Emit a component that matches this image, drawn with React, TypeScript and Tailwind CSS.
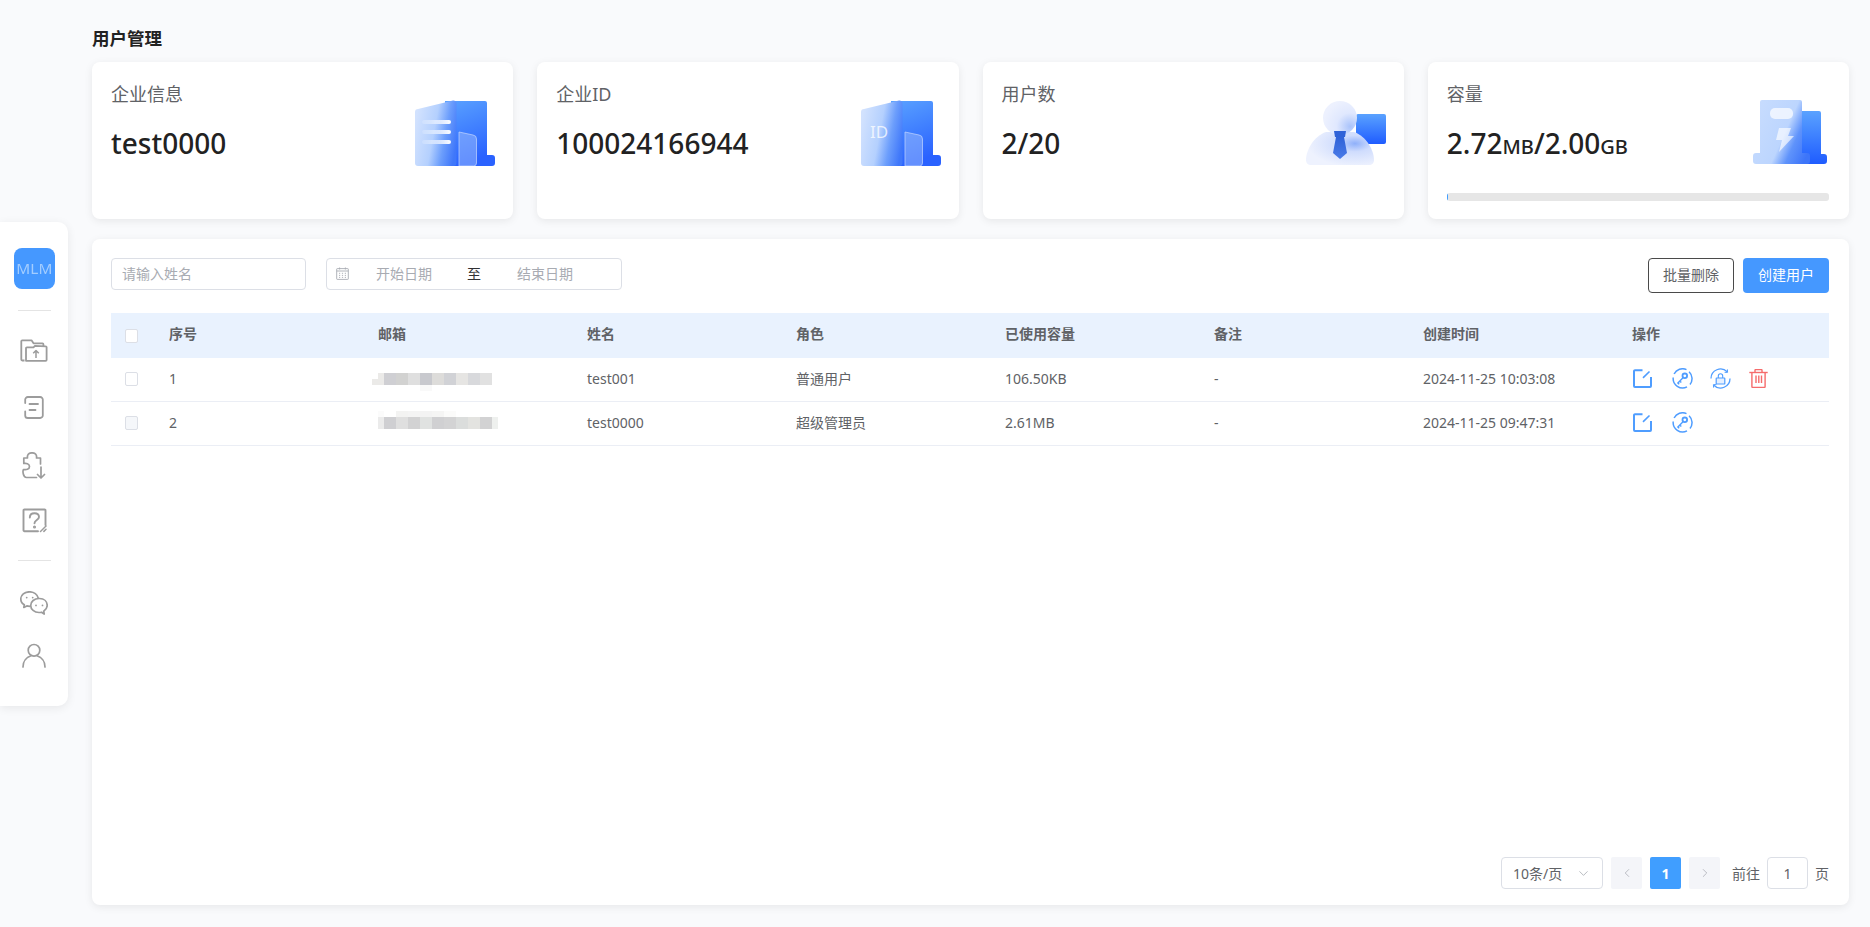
import { ChevronDown, ChevronLeft, ChevronRight } from "lucide-react";

const columns = ["序号", "邮箱", "姓名", "角色", "已使用容量", "备注", "创建时间", "操作"];

const users = [
  {
    id: 1,
    name: "test001",
    role: "普通用户",
    used: "106.50KB",
    created: "2024-11-25 10:03:08",
    disabled: false,
  },
  {
    id: 2,
    name: "test0000",
    role: "超级管理员",
    used: "2.61MB",
    created: "2024-11-25 09:47:31",
    disabled: true,
  },
];

// pixelated email addresses
const mosaicOne = [
  "bg-[#cfcfd3]",
  "bg-[#d2d2d1]",
  "bg-[#dfdfdf]",
  "bg-[#c8c9ce]",
  "bg-[#dddcda]",
  "bg-[#d1d2d6]",
  "bg-[#e6e5e3]",
  "bg-[#d8d9dc]",
  "bg-[#e1e1e1]",
];
const mosaicTwo = [
  "bg-[#ebebeb]",
  "bg-[#cfcfd2]",
  "bg-[#dfdfdf]",
  "bg-[#d2d2d3]",
  "bg-[#e0e2e1]",
  "bg-[#d0d0d2]",
  "bg-[#d3d3d4]",
  "bg-[#dbdddc]",
  "bg-[#e3e3e0]",
  "bg-[#d2d2d3]",
  "bg-[#eef0ee]",
];
const mosaicTwoTop = [
  "bg-[#fbfbfb]",
  "bg-white",
  "bg-[#f3f3f2]",
  "bg-[#f4f4f4]",
  "bg-[#f3f3f3]",
  "bg-[#f5f5f4]",
  "bg-[#fbfbfa]",
];

function EmailMosaicOne() {
  return (
    <div className="relative h-[12px] w-[120px] flex -ml-[6px]">
      <div className="h-[12px] w-[12px] flex flex-col justify-end">
        <div className="h-[6px] w-[12px] bg-[#ebeae8]" />
      </div>
      {mosaicOne.map((c, i) => (
        <div key={i} className={`h-[12px] w-[12px] ${c}`} />
      ))}
      <div className="absolute left-[48px] top-[12px] h-[6px] w-[12px] bg-[#f9f9f9]" />
      <div className="absolute left-[6px] top-0 h-[6px] w-[6px] bg-[#ebeae8]" />
    </div>
  );
}

function EmailMosaicTwo() {
  return (
    <div className="relative h-[12px] w-[120px] flex">
      {mosaicTwo.map((c, i) => (
        <div key={i} className={`h-[12px] ${i === 0 || i === 10 ? "w-[6px]" : "w-[12px]"} ${c}`} />
      ))}
      <div className="absolute left-0 -top-[6px] flex">
        {mosaicTwoTop.map((c, i) => (
          <div key={i} className={`h-[6px] ${i === 0 ? "w-[6px]" : "w-[12px]"} ${c}`} />
        ))}
      </div>
    </div>
  );
}

function FolderIcon() {
  return (
    <svg width="28" height="24" viewBox="0 0 28 24" fill="none" stroke="#9c9c9c" strokeWidth="1.8" strokeLinejoin="round">
      <path d="M4.500 21.500H2.200a.9.9 0 0 1-.9-.9V2.200a.9.9 0 0 1 .9-.9h9.300l2 3h9a.9.9 0 0 1 .9.900v2.200" />
      <path d="M6 21.800V9.200a.9.9 0 0 1 .9-.9h6.600l1.400-1.400 10.900.4c.4 0 .8.400.8.900v12.700a.9.9 0 0 1-.9.900H6.900a.9.9 0 0 1-.9-.9z" />
      <path d="M16 19v-7.200M13.200 14.200 16 11.600l2.800 2.600" strokeWidth="1.500" />
    </svg>
  );
}

function NoteIcon() {
  return (
    <svg width="20" height="23" viewBox="0 0 20 23" fill="none" stroke="#9c9c9c" strokeWidth="1.800" strokeLinecap="round">
      <path d="M1.200 7V3.600A2.600 2.600 0 0 1 3.800 1h12.400a2.600 2.600 0 0 1 2.600 2.600v15.800a2.600 2.600 0 0 1-2.600 2.600H3.800a2.600 2.600 0 0 1-2.600-2.600v-4" />
      <path d="M5.500 8h8.500M5.500 14h6" />
    </svg>
  );
}

function PluginIcon() {
  return (
    <svg width="24" height="27" viewBox="0 0 24 27" fill="none" stroke="#9c9c9c" strokeWidth="1.700" strokeLinecap="round" strokeLinejoin="round">
      <path d="M18.500 12V6H14.500C15 3 13.500.8 10 .8 6.500.8 5 3 5.500 6H1.800v5.500c2.200-.5 5.700 0 5.700 3s-3.500 3.500-6 3c-1 1.500-.5 8 3 8h10" />
      <path d="M19 15v10.500M15.500 22.500 19 26l3.500-3.500" />
    </svg>
  );
}

function HelpIcon() {
  return (
    <svg width="25" height="25" viewBox="0 0 25 25" fill="none" stroke="#9c9c9c" strokeWidth="1.900" strokeLinecap="round">
      <path d="M16 23.200H2.400a.9.9 0 0 1-.9-.9V2.400a.9.9 0 0 1 .9-.9h20.200a.9.9 0 0 1 .9.900v14.600" />
      <path d="M7.800 9.500c0-2.700 2-4.300 4.700-4.300s4.500 1.600 4.500 3.800c0 3-4.500 3.100-4.500 6.300" />
      <circle cx="12.500" cy="19" r="0.600" fill="#9c9c9c" />
      <path d="M18.500 23.500 24 18" strokeWidth="1.500" />
      <path d="M21.900 23.400 24 21.300" strokeWidth="1.500" />
    </svg>
  );
}

function ChatIcon() {
  return (
    <svg width="28" height="24" viewBox="0 0 28 24" fill="none" stroke="#9c9c9c" strokeWidth="1.700" strokeLinejoin="round" strokeLinecap="round">
      <path d="M18.300 7.200C17.500 3.600 14 .8 9.500 .8 4.500 .8.8 4 .8 8c0 2.500 1.300 4.500 3.500 5.800l-.5 2.700 3-1.600c1 .3 2 .4 3.200.5" />
      <path d="M19 7.500c-4.700 0-8.300 3-8.300 7 0 3.900 3.600 7 8.300 7 1 0 1.700-.1 2.500-.3l2.700 1.800-.5-2.800c2-1.300 3.500-3.300 3.500-5.700 0-4-3-7-7.700-7z" />
      <circle cx="6.700" cy="6.600" r="0.900" fill="#9c9c9c" stroke="none" />
      <circle cx="12.700" cy="6.600" r="0.900" fill="#9c9c9c" stroke="none" />
      <circle cx="16" cy="14.400" r="0.900" fill="#9c9c9c" stroke="none" />
      <circle cx="22.500" cy="14.400" r="0.900" fill="#9c9c9c" stroke="none" />
    </svg>
  );
}

function UserIcon() {
  return (
    <svg width="24" height="25" viewBox="0 0 24 25" fill="none" stroke="#9c9c9c" strokeWidth="1.700" strokeLinecap="round">
      <circle cx="12" cy="7.300" r="5.800" />
      <path d="M1 24c0-5.800 3.800-9.700 7.500-11M23 24c0-5.800-3.800-9.700-7.500-11" />
    </svg>
  );
}

function CalendarIcon() {
  return (
    <svg width="13" height="13" viewBox="0 0 13 13" fill="none" stroke="#a8abb2" strokeWidth="0.900">
      <rect x="0.700" y="1.600" width="11.600" height="10.800" rx="0.600" />
      <path d="M0.700 4h11.600M3.600 0.500v2M9.400 0.500v2" />
      <path d="M3 6.300h1.200M5.900 6.300h1.200M8.800 6.300h1.200M3 8.400h1.200M5.900 8.400h1.200M8.800 8.400h1.200M3 10.400h1.200M5.900 10.400h1.200M8.800 10.400h1.200" />
    </svg>
  );
}

function EditIcon() {
  return (
    <svg width="19" height="19" viewBox="0 0 19 19" fill="none" stroke="#4f9dff" strokeWidth="2">
      <path d="M9.500 1.200H2a1 1 0 0 0-1 1V17a1 1 0 0 0 1 1h15a1 1 0 0 0 1-1V8" />
      <path d="M10 8.800 16.500 2.500" strokeWidth="1.700" />
    </svg>
  );
}

function KeyIcon() {
  return (
    <svg width="21" height="21" viewBox="0 0 21 21" fill="none" stroke="#4f9dff" strokeWidth="1.500">
      <path d="M14.500 1.600A9.500 9.500 0 0 0 2.100 6M1.200 9.500a9.500 9.500 0 0 0 13.800 9.400M18 16.500a9.500 9.500 0 0 0 2-6.500 9.500 9.500 0 0 0-2.900-6.300" />
      <circle cx="12.800" cy="7.800" r="2.300" strokeWidth="1.800" />
      <path d="M11 9.800 5.400 15.400M7.800 13l1.500 1.500M5.900 14.900l1.300 1.300" strokeWidth="1.400" />
    </svg>
  );
}

function LockResetIcon() {
  return (
    <svg width="21" height="21" viewBox="0 0 21 21" fill="none" stroke="#4f9dff" strokeWidth="1.300">
      <path d="M1 10.500A9.500 9.500 0 0 1 17.200 3.800M20 10.500A9.500 9.500 0 0 1 3.800 17.200" />
      <path d="M14.600 4.300l3 .1-.2-3M6.400 16.700l-3-.1.2 3" strokeWidth="1" />
      <rect x="6.200" y="10" width="8.600" height="6" rx="0.600" strokeWidth="1.200" fill="#e6f0ff" />
      <path d="M8.300 10V8a2.200 2.200 0 0 1 4.400 0v2" strokeWidth="1.100" />
    </svg>
  );
}

function TrashIcon() {
  return (
    <svg width="19" height="19" viewBox="0 0 19 19" fill="none" stroke="#f56c6c" strokeWidth="1.400">
      <path d="M0.300 3.500h18.400" />
      <path d="M6 3.300V1.200a.7.700 0 0 1 .7-.7h5.600a.7.700 0 0 1 .7.700v2.100" />
      <path d="M2.900 3.500v14a1 1 0 0 0 1 1h11.200a1 1 0 0 0 1-1v-14" />
      <path d="M7 6.500v7.500M9.800 6.500v7.500M12.500 6.500v7.500" />
    </svg>
  );
}

function DocArt() {
  return (
    <svg width="80" height="66" viewBox="0 0 80 66">
      <defs>
        <linearGradient id="docBack" x1="0" y1="0" x2="0.300" y2="1">
          <stop offset="0" stopColor="#5aa2ff" />
          <stop offset="1" stopColor="#2a62ff" />
        </linearGradient>
        <linearGradient id="docFront" x1="0" y1="0.350" x2="1" y2="0.650">
          <stop offset="0" stopColor="#d2e2fe" />
          <stop offset="0.450" stopColor="#b4d0fe" />
          <stop offset="0.720" stopColor="#6c9efc" />
          <stop offset="1" stopColor="#3f77fa" />
        </linearGradient>
        <linearGradient id="docLine" x1="0" y1="0" x2="1" y2="0">
          <stop offset="0" stopColor="#fff" stopOpacity="0.150" />
          <stop offset="1" stopColor="#fff" />
        </linearGradient>
        <filter id="docSoft"><feGaussianBlur stdDeviation="0.500" /></filter>
      </defs>
      <path d="M30 1h40a2 2 0 0 1 2 2v52h5a3 3 0 0 1 3 3v5a3 3 0 0 1-3 3H30z" fill="url(#docBack)" />
      <path d="M3 9 38 0.500a3 3 0 0 1 3.500 3V63a3 3 0 0 1-3 3H3a3 3 0 0 1-3-3V12a3 3 0 0 1 3-3z" fill="url(#docFront)" />
      <g filter="url(#docSoft)">
        <rect x="7" y="20" width="29" height="4" rx="2" fill="url(#docLine)" />
        <rect x="7" y="30" width="29" height="4" rx="2" fill="url(#docLine)" />
        <rect x="7" y="40" width="29" height="4" rx="2" fill="url(#docLine)" />
      </g>
      <path d="M44 32 58 35a4 4 0 0 1 3.500 4v24a3 3 0 0 1-3 3H44z" fill="#9dbdfd" fillOpacity="0.500" stroke="#c3d6ff" strokeOpacity="0.700" />
    </svg>
  );
}

function IdArt() {
  return (
    <svg width="80" height="66" viewBox="0 0 80 66">
      <defs>
        <linearGradient id="idBack" x1="0" y1="0" x2="0.300" y2="1">
          <stop offset="0" stopColor="#5aa2ff" />
          <stop offset="1" stopColor="#2a62ff" />
        </linearGradient>
        <linearGradient id="idFront" x1="0" y1="0.350" x2="1" y2="0.650">
          <stop offset="0" stopColor="#d2e2fe" />
          <stop offset="0.450" stopColor="#b4d0fe" />
          <stop offset="0.720" stopColor="#6c9efc" />
          <stop offset="1" stopColor="#3f77fa" />
        </linearGradient>
      </defs>
      <path d="M30 1h40a2 2 0 0 1 2 2v52h5a3 3 0 0 1 3 3v5a3 3 0 0 1-3 3H30z" fill="url(#idBack)" />
      <path d="M3 9 38 0.500a3 3 0 0 1 3.500 3V63a3 3 0 0 1-3 3H3a3 3 0 0 1-3-3V12a3 3 0 0 1 3-3z" fill="url(#idFront)" />
      <text x="9" y="38" fill="#fff" fillOpacity="0.750" fontSize="17" fontFamily="'Noto Sans', sans-serif">ID</text>
      <path d="M44 32 58 35a4 4 0 0 1 3.500 4v24a3 3 0 0 1-3 3H44z" fill="#9dbdfd" fillOpacity="0.500" stroke="#c3d6ff" strokeOpacity="0.700" />
    </svg>
  );
}

function UserArt() {
  return (
    <svg width="80" height="66" viewBox="0 0 80 66">
      <defs>
        <linearGradient id="userBack" x1="0" y1="0" x2="0" y2="1">
          <stop offset="0" stopColor="#5aa2ff" />
          <stop offset="1" stopColor="#1f5cff" />
        </linearGradient>
        <radialGradient id="userBody" cx="0.720" cy="0.350" r="0.700">
          <stop offset="0" stopColor="#8fb0fa" />
          <stop offset="0.350" stopColor="#cfdcfd" />
          <stop offset="1" stopColor="#eef2fe" />
        </radialGradient>
        <radialGradient id="userHead" cx="0.800" cy="0.750" r="0.800">
          <stop offset="0" stopColor="#a9c3fb" />
          <stop offset="0.500" stopColor="#e0e8fe" />
          <stop offset="1" stopColor="#edf1fe" />
        </radialGradient>
        <linearGradient id="userTie" x1="0" y1="0" x2="0" y2="1">
          <stop offset="0" stopColor="#2f62d8" />
          <stop offset="1" stopColor="#4a7be8" />
        </linearGradient>
      </defs>
      <rect x="50" y="14" width="30" height="30" rx="2" fill="url(#userBack)" />
      <path d="M20 32C8 36 0 50 0 60c0 3 2 5 5 5h58c3 0 5-2 5-5 0-10-8-24-20-28z" fill="url(#userBody)" />
      <circle cx="34" cy="18" r="17" fill="url(#userHead)" />
      <path d="M28 31h12l-1 6h-10z" fill="#2f62d8" />
      <path d="M30 37h8l3 16-7 6-7-6z" fill="url(#userTie)" />
    </svg>
  );
}

function PowerArt() {
  return (
    <svg width="74" height="64" viewBox="0 0 74 64">
      <defs>
        <linearGradient id="powerBack" x1="0" y1="0" x2="0" y2="1">
          <stop offset="0" stopColor="#5aa2ff" />
          <stop offset="1" stopColor="#1f5cff" />
        </linearGradient>
        <linearGradient id="powerFront" x1="0" y1="0.250" x2="1" y2="0.750">
          <stop offset="0" stopColor="#c7dcfe" />
          <stop offset="0.550" stopColor="#bcd5fe" />
          <stop offset="0.750" stopColor="#5f93fb" />
          <stop offset="1" stopColor="#3d75f9" />
        </linearGradient>
      </defs>
      <path d="M48 11h18a2 2 0 0 1 2 2v41h3a3 3 0 0 1 3 3v4a3 3 0 0 1-3 3H48z" fill="url(#powerBack)" />
      <path d="M7 2a2 2 0 0 1 2-2h38a2 2 0 0 1 2 2v51h5a3 3 0 0 1 3 3v5a3 3 0 0 1-3 3H3a3 3 0 0 1-3-3v-5a3 3 0 0 1 3-3h4z" fill="url(#powerFront)" />
      <rect x="17" y="8" width="23" height="11" rx="5" fill="#fff" fillOpacity="0.700" />
      <path d="M26 28h12l-3 8h6L26 52l3-12h-6z" fill="#fff" fillOpacity="0.650" />
    </svg>
  );
}

function StatCard({ title, art, artRight, children }: { title: string; art: React.ReactNode; artRight?: string; children: React.ReactNode }) {
  return (
    <div className="relative h-[157px] rounded-[8px] bg-white pt-[20px] pr-5 pl-[19px] shadow-[0_2px_8px_rgba(0,0,0,0.08)]">
      <div className="text-[18px] leading-[24px] text-[#606266]">{title}</div>
      <div className="mt-[18px] text-[28px] leading-[38px] font-medium text-[#222]">{children}</div>
      <div className={`absolute top-[38px] ${artRight ?? "right-[18px]"}`}>{art}</div>
    </div>
  );
}

export default function App() {
  return (
    <div className="flex h-screen items-center bg-[#f9fafc] font-['Noto_Sans','Noto_Sans_CJK_SC',sans-serif] text-[14px] text-[#606266]">
      {/* Side bar */}
      <aside className="flex h-[484px] w-[68px] shrink-0 flex-col items-center rounded-r-[10px] bg-white pt-[26px] shadow-[0_2px_10px_rgba(0,0,0,0.08)]">
        <div className="flex h-[41px] w-[41px] items-center justify-center rounded-[8px] bg-[#4598ff] text-[14px] text-[#a3cdff]">
          <span className="scale-x-110">MLM</span>
        </div>
        <div className="mt-[21px] h-px w-[33px] bg-[#e4e4e4]" />
        <div className="mt-[28px] flex h-[24px] items-center"><FolderIcon /></div>
        <div className="mt-[33px] flex h-[23px] items-center"><NoteIcon /></div>
        <div className="mt-[33px] flex h-[27px] items-center"><PluginIcon /></div>
        <div className="mt-[29px] flex h-[25px] items-center"><HelpIcon /></div>
        <div className="mt-[27px] h-px w-[33px] bg-[#e4e4e4]" />
        <div className="mt-[30px] flex h-[24px] items-center"><ChatIcon /></div>
        <div className="mt-[28px] flex h-[25px] items-center"><UserIcon /></div>
      </aside>

      <main className="ml-[24px] flex h-full min-w-0 flex-1 flex-col pt-[26px] pr-[21px] pb-[22px]">
        <h1 className="mb-[12px] text-[17.5px] leading-[24px] font-bold text-[#222]">用户管理</h1>

        {/* Top cards */}
        <div className="grid grid-cols-4 gap-6">
          <StatCard title="企业信息" art={<DocArt />}>test0000</StatCard>
          <StatCard title="企业ID" art={<IdArt />}>100024166944</StatCard>
          <StatCard title="用户数" art={<UserArt />}>2/20</StatCard>
          <StatCard title="容量" art={<PowerArt />} artRight="right-[22px]">
            2.72<span className="text-[20px]">MB</span>/2.00<span className="text-[20px]">GB</span>
            <div className="mt-[27px] h-[8px] overflow-hidden rounded-[3px] bg-[#e6e6e6]">
              <div className="h-full w-px bg-[#409eff]" />
            </div>
          </StatCard>
        </div>

        {/* Table panel */}
        <section className="mt-5 flex min-h-0 flex-1 flex-col rounded-[8px] bg-white pt-[19px] pr-5 pb-4 pl-[19px] shadow-[0_2px_8px_rgba(0,0,0,0.08)]">
          <div className="flex items-start justify-between">
            <div className="flex gap-[20px]">
              <input
                placeholder="请输入姓名"
                className="h-8 w-[195px] rounded-[4px] border border-[#dcdfe6] px-[10px] pb-[1px] text-[14px] outline-none placeholder:text-[#a8abb2]"
              />
              <div className="flex h-8 w-[296px] items-center rounded-[4px] border border-[#dcdfe6] pb-[1px] pl-[9px] text-[#a8abb2]">
                <CalendarIcon />
                <span className="ml-[27px] w-[56px] text-center">开始日期</span>
                <span className="ml-[35px] text-[#303133]">至</span>
                <span className="ml-[36px] w-[56px] text-center">结束日期</span>
              </div>
            </div>
            <div className="flex gap-[9px]">
              <button className="h-[35px] w-[86px] rounded-[4px] border border-[#4a4a4a] bg-white pb-[2px] text-[#606266]">批量删除</button>
              <button className="h-[35px] w-[86px] rounded-[4px] bg-[#4598ff] pb-[2px] text-white">创建用户</button>
            </div>
          </div>

          {/* Table */}
          <div className="mt-5 flex-1">
            <div className="grid h-[45px] grid-cols-[46px_repeat(8,1fr)] items-center bg-[#e9f2fe] pb-[4px] font-bold">
              <div className="pl-[14px]">
                <div className="mt-[4px] h-[14px] w-[13px] rounded-[2px] border border-[#dcdfe6] bg-white" />
              </div>
              {columns.map((c) => (
                <div key={c} className="pl-3">{c}</div>
              ))}
            </div>
            {users.map((u) => (
              <div key={u.id} className="grid h-[44px] grid-cols-[46px_repeat(8,1fr)] items-center border-b border-[#ebeef5] pb-[2px]">
                <div className="pl-[14px]">
                  <div className={`h-[14px] w-[13px] rounded-[2px] border border-[#dcdfe6] ${u.disabled ? "bg-[#f5f7fa]" : "bg-white"}`} />
                </div>
                <div className="pl-3">{u.id}</div>
                <div className="pl-3">{u.id === 1 ? <EmailMosaicOne /> : <EmailMosaicTwo />}</div>
                <div className="pl-3">{u.name}</div>
                <div className="pl-3">{u.role}</div>
                <div className="pl-3">{u.used}</div>
                <div className="pl-3">-</div>
                <div className="pl-3">{u.created}</div>
                <div className="flex items-center gap-[18px] pl-[13px]">
                  <EditIcon />
                  <div className="ml-[2px] flex"><KeyIcon /></div>
                  {!u.disabled && <div className="-ml-px flex"><LockResetIcon /></div>}
                  {!u.disabled && <TrashIcon />}
                </div>
              </div>
            ))}
          </div>

          {/* Pagination */}
          <div className="flex h-8 items-center justify-end">
            <div className="flex h-8 w-[102px] items-center justify-between rounded-[4px] border border-[#dcdfe6] pr-[11px] pl-[11px]">
              <span>10条/页</span>
              <ChevronDown className="h-[15px] w-[15px] text-[#a8abb2]" strokeWidth={1.3} />
            </div>
            <button className="ml-2 flex h-8 w-[31px] items-center justify-center rounded-[2px] bg-[#f4f5f9] text-[#a8abb2]">
              <ChevronLeft className="h-[14px] w-[14px]" strokeWidth={1.3} />
            </button>
            <button className="ml-2 flex h-8 w-[31px] items-center justify-center rounded-[2px] bg-[#409eff] font-bold text-white">1</button>
            <button className="ml-2 flex h-8 w-[31px] items-center justify-center rounded-[2px] bg-[#f4f5f9] text-[#a8abb2]">
              <ChevronRight className="h-[14px] w-[14px]" strokeWidth={1.3} />
            </button>
            <span className="ml-3">前往</span>
            <input
              defaultValue="1"
              className="ml-[7px] h-8 w-[41px] rounded-[4px] border border-[#dcdfe6] text-center text-[14px] outline-none"
            />
            <span className="ml-[7px]">页</span>
          </div>
        </section>
      </main>
    </div>
  );
}
